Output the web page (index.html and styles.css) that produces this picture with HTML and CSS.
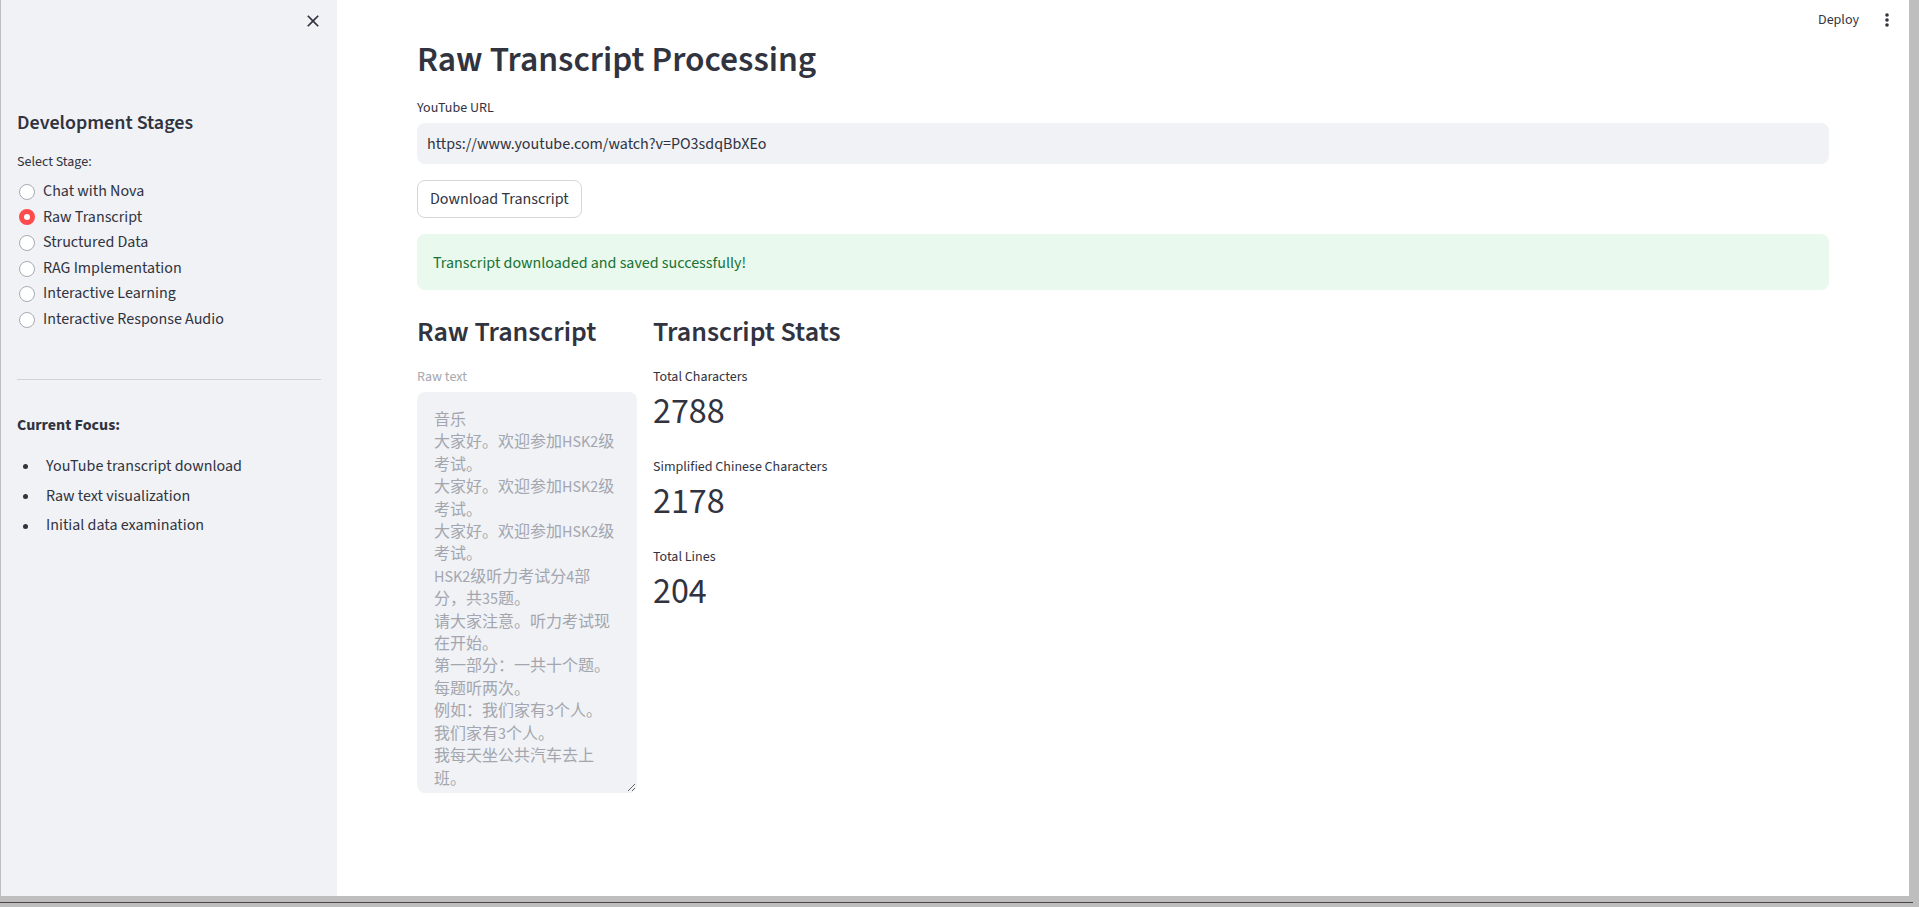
FILE: index.html
```html
<!DOCTYPE html>
<html lang="en">
<head>
<meta charset="utf-8">
<title>Raw Transcript Processing</title>
<link rel="stylesheet" href="styles.css">
</head>
<body>
<div class="screen">
  <div class="window">
    <aside class="sidebar">
      <div class="sb-top">
        <button class="close" aria-label="Close sidebar">
          <svg width="20" height="20" viewBox="0 0 24 24"><path fill="#31333f" d="M19 6.41L17.59 5 12 10.59 6.41 5 5 6.41 10.59 12 5 17.59 6.41 19 12 13.41 17.59 19 19 17.59 13.41 12z"/></svg>
        </button>
      </div>
      <h3 class="sb-title">Development Stages</h3>
      <div class="sb-label">Select Stage:</div>
      <div class="radios">
        <label class="radio"><span class="dot"></span>Chat with Nova</label>
        <label class="radio"><span class="dot on"></span>Raw Transcript</label>
        <label class="radio"><span class="dot"></span>Structured Data</label>
        <label class="radio"><span class="dot"></span>RAG Implementation</label>
        <label class="radio"><span class="dot"></span>Interactive Learning</label>
        <label class="radio"><span class="dot"></span>Interactive Response Audio</label>
      </div>
      <hr class="sb-hr">
      <p class="focus">Current Focus:</p>
      <ul class="focus-list">
        <li>YouTube transcript download</li>
        <li>Raw text visualization</li>
        <li>Initial data examination</li>
      </ul>
    </aside>
    <main class="main">
      <div class="toolbar">
        <span class="deploy">Deploy</span>
        <svg class="kebab" width="4" height="14" viewBox="0 0 4 14"><circle cx="2" cy="2" r="1.8" fill="#31333f"/><circle cx="2" cy="7" r="1.8" fill="#31333f"/><circle cx="2" cy="12" r="1.8" fill="#31333f"/></svg>
      </div>
      <div class="block">
        <h1 class="title">Raw Transcript Processing</h1>
        <div class="field-label">YouTube URL</div>
        <div class="input">https://www.youtube.com/watch?v=PO3sdqBbXEo</div>
        <button class="btn">Download Transcript</button>
        <div class="alert">Transcript downloaded and saved successfully!</div>
        <div class="cols">
          <div class="col">
            <h3 class="sub">Raw Transcript</h3>
            <div class="field-label disabled">Raw text</div>
            <textarea class="raw" disabled>音乐
大家好。欢迎参加HSK2级考试。
大家好。欢迎参加HSK2级考试。
大家好。欢迎参加HSK2级考试。
HSK2级听力考试分4部分，共35题。
请大家注意。听力考试现在开始。
第一部分：一共十个题。
每题听两次。
例如：我们家有3个人。
我们家有3个人。
我每天坐公共汽车去上班。
我每天坐公共汽车去上班。
现在开始第1题。</textarea>
          </div>
          <div class="col">
            <h3 class="sub">Transcript Stats</h3>
            <div class="metrics">
              <div class="metric"><div class="m-label">Total Characters</div><div class="m-value">2788</div></div>
              <div class="metric"><div class="m-label">Simplified Chinese Characters</div><div class="m-value">2178</div></div>
              <div class="metric"><div class="m-label">Total Lines</div><div class="m-value">204</div></div>
            </div>
          </div>
        </div>
      </div>
    </main>
  </div>
  <div class="bottom-frame"><div class="frame-line"></div></div>
</div>
</body>
</html>
```

FILE: styles.css
```css
* { box-sizing: border-box; }
html, body {
  margin: 0;
  padding: 0;
}
body {
  width: 1919px;
  height: 907px;
  overflow: hidden;
  background: #bebebe;
  font-family: "Source Sans 3", "Noto Sans CJK SC", sans-serif;
  color: #31333f;
}
.screen {
  display: flex;
  flex-direction: column;
}
.window {
  display: flex;
  width: 1908px;
  height: 896px;
  margin-left: 1px;
  background: #fff;
}
.bottom-frame {
  height: 11px;
  padding-top: 6px;
}
.frame-line {
  width: 1913px;
  height: 1px;
  background: #4a4444;
}

/* Sidebar */
.sidebar {
  width: 336px;
  flex: 0 0 336px;
  background: #f0f2f6;
  padding: 0 16px;
  display: flex;
  flex-direction: column;
}
.sb-top {
  height: 42px;
  display: flex;
  justify-content: flex-end;
  align-items: center;
  margin-right: -4px;
}
.close {
  width: 24px;
  height: 24px;
  padding: 0;
  border: 0;
  background: transparent;
  display: flex;
  align-items: center;
  justify-content: center;
}
.sb-title {
  margin: 69px 0 0;
  font-size: 20px;
  line-height: 24px;
  font-weight: 600;
}
.sb-label {
  margin-top: 15px;
  font-size: 14px;
  line-height: 24px;
}
.radios {
  margin-top: 5px;
  display: flex;
  flex-direction: column;
}
.radio {
  display: flex;
  align-items: center;
  font-size: 16px;
  line-height: 25.6px;
}
.dot {
  width: 16px;
  height: 16px;
  border-radius: 50%;
  background: #fff;
  border: 1px solid #a9abb3;
  margin: 0 8px 0 2px;
  flex: 0 0 16px;
}
.dot.on {
  background: #fff;
  border: 5px solid #ff4b4b;
}
.sb-hr {
  margin: 46px 0 0;
  border: 0;
  height: 1px;
  background: #d0d2d7;
}
.focus {
  margin: 33px 0 0;
  font-size: 16px;
  line-height: 25.6px;
  font-weight: 700;
}
.focus-list {
  list-style: none;
  margin: 16px 0 0;
  padding: 0;
}
.focus-list li {
  display: flex;
  align-items: center;
  font-size: 16px;
  line-height: 25.6px;
  margin-bottom: 4px;
}
.focus-list li::before {
  content: "";
  width: 5px;
  height: 5px;
  border-radius: 50%;
  background: #31333f;
  margin: 0 18px 0 6px;
  flex: 0 0 5px;
}

/* Main */
.main {
  flex: 1;
  position: relative;
  background: #fff;
}
.toolbar {
  position: absolute;
  top: 0;
  right: 0;
  height: 40px;
  display: flex;
  align-items: center;
  padding-right: 20px;
}
.deploy {
  font-size: 14px;
  margin-right: 26px;
}
.kebab { display: block; }

.block {
  padding: 38px 80px 0;
  display: flex;
  flex-direction: column;
}
.title {
  margin: 0;
  font-size: 35.5px;
  line-height: 44px;
  font-weight: 600;
}
.field-label {
  margin-top: 14px;
  font-size: 14px;
  line-height: 24px;
  margin-bottom: 3px;
}
.field-label.disabled {
  margin-top: 16px;
  margin-bottom: 3px;
  color: #a7a8ae;
}
.input {
  height: 41px;
  background: #f0f2f6;
  border: 1px solid transparent;
  border-radius: 8px;
  padding: 2px 9px 0;
  font-size: 16px;
  line-height: 37px;
}
.btn {
  align-self: flex-start;
  margin-top: 16px;
  height: 38px;
  padding: 0 12px;
  background: #fff;
  border: 1px solid #d6d6d9;
  border-radius: 8px;
  font-family: inherit;
  font-size: 16px;
  color: #31333f;
}
.alert {
  margin-top: 16px;
  height: 56px;
  padding: 2px 16px 0;
  border-radius: 8px;
  background: #e9f9ee;
  color: #177233;
  font-size: 16px;
  line-height: 54px;
}
.cols {
  margin-top: 16px;
  display: grid;
  grid-template-columns: 220px 1fr;
  column-gap: 16px;
}
.col {
  display: flex;
  flex-direction: column;
}
.sub {
  margin: 0;
  padding-top: 9px;
  font-size: 28px;
  line-height: 34px;
  height: 43px;
  font-weight: 600;
}
.raw {
  width: 220px;
  height: 401px;
  padding: 16px;
  border: 1px solid transparent;
  border-radius: 8px;
  background: #f0f2f6;
  font-family: inherit;
  font-size: 16px;
  line-height: 22.4px;
  color: #a3a6ae;
  -webkit-text-fill-color: #a3a6ae;
  opacity: 1;
  overflow: hidden;
  resize: vertical;
  display: block;
}
.metrics {
  margin-top: 16px;
  display: flex;
  flex-direction: column;
  gap: 20px;
}
.m-label {
  font-size: 14px;
  line-height: 24px;
}
.m-value {
  font-size: 36px;
  line-height: 46px;
}
```
